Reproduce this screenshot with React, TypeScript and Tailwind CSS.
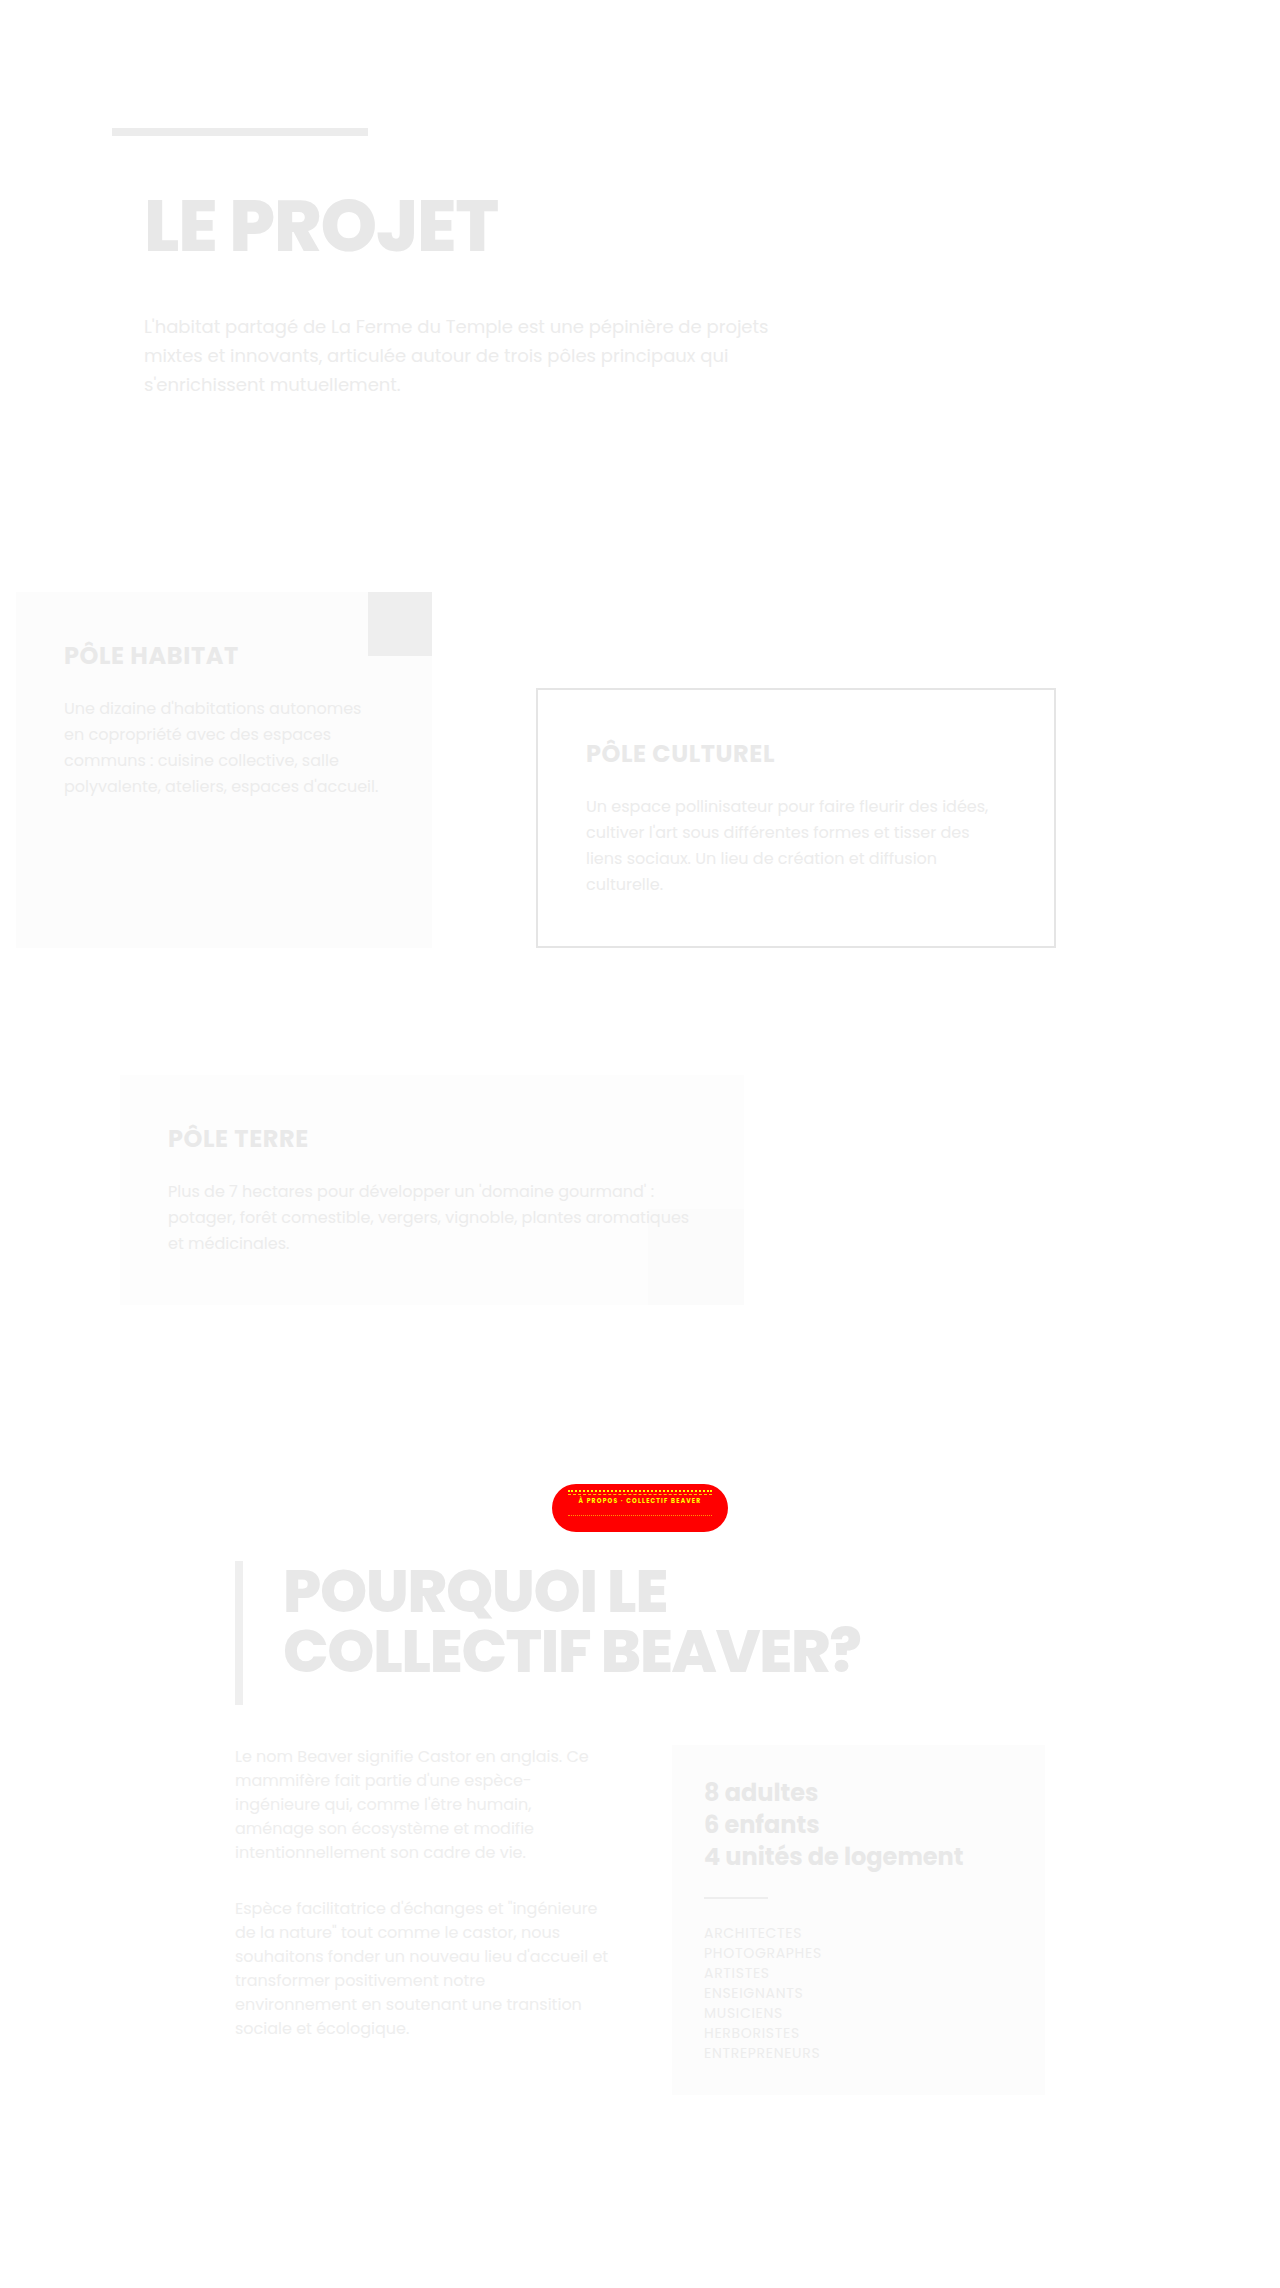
import type { ReactNode } from 'react';

const font = "font-['Poppins','Inter','Open_Sans',sans-serif]";

function Lines({ lines }: { lines: string[] }) {
  return (
    <>
      {lines.map((l) => (
        <span key={l} className="block whitespace-nowrap">
          {l}
        </span>
      ))}
    </>
  );
}

interface PoleProps {
  title: string;
  lines: string[];
  className?: string;
  corner?: ReactNode;
}

function Pole({ title, lines, className, corner }: PoleProps) {
  return (
    <div className={`relative p-12 ${className ?? ''}`}>
      {corner}
      <h3 className="relative text-2xl leading-8 font-bold tracking-wide uppercase text-[#e9e9e9]">
        {title}
      </h3>
      <p className="relative mt-6 text-base leading-[26px] text-[#ececec]">
        <Lines lines={lines} />
      </p>
    </div>
  );
}

const metiers = [
  'Architectes',
  'Photographes',
  'Artistes',
  'Enseignants',
  'Musiciens',
  'Herboristes',
  'Entrepreneurs',
];

export default function App() {
  return (
    <div className={`min-h-screen bg-white ${font}`}>
      {/* intro */}
      <section className="px-[112px] pt-32 pb-20">
        <div className="h-2 w-64 bg-[#ececec]" />
        <h1 className="mt-[54px] ml-8 text-[72px] leading-[72px] font-extrabold tracking-[-0.015em] text-[#e8e8e8]">
          LE PROJET
        </h1>
        <p className="mt-[50px] ml-8 text-lg leading-[29px] text-[#ececec]">
          <Lines
            lines={[
              "L'habitat partagé de La Ferme du Temple est une pépinière de projets",
              'mixtes et innovants, articulée autour de trois pôles principaux qui',
              "s'enrichissent mutuellement.",
            ]}
          />
        </p>
      </section>

      {/* les trois pôles */}
      <section className="px-4 pt-[113px]">
        <div className="flex items-end gap-[104px]">
          <Pole
            title="Pôle Habitat"
            className="h-[356px] w-[416px] bg-[#fcfcfc]"
            corner={<div className="absolute top-0 right-0 h-16 w-16 bg-[#eeeeee]" />}
            lines={[
              "Une dizaine d'habitations autonomes",
              'en copropriété avec des espaces',
              'communs : cuisine collective, salle',
              "polyvalente, ateliers, espaces d'accueil.",
            ]}
          />
          <Pole
            title="Pôle Culturel"
            className="w-[520px] border-2 border-[#e5e5e5] bg-white"
            lines={[
              'Un espace pollinisateur pour faire fleurir des idées,',
              "cultiver l'art sous différentes formes et tisser des",
              'liens sociaux. Un lieu de création et diffusion',
              'culturelle.',
            ]}
          />
        </div>
        <Pole
          title="Pôle Terre"
          className="mt-[127px] ml-[104px] w-[624px] bg-[#fdfdfd]"
          corner={<div className="absolute right-0 bottom-0 h-24 w-24 bg-[#fbfbfb]" />}
          lines={[
            "Plus de 7 hectares pour développer un 'domaine gourmand' :",
            'potager, forêt comestible, vergers, vignoble, plantes aromatiques',
            'et médicinales.',
          ]}
        />
      </section>

      {/* pourquoi beaver */}
      <section className="pt-[179px] pb-32">
        <div className="mx-auto flex h-12 w-[176px] flex-col items-center justify-start gap-[2px] overflow-hidden rounded-full bg-[#ff0000] px-4 pt-[6px]">
          <div className="w-full border-t-2 border-dotted border-[#ffff00]" />
          <div className="w-full border-t border-dashed border-[#ffff00] opacity-80" />
          <span className="text-[6px] leading-[8px] font-bold tracking-[0.2em] whitespace-nowrap text-[#ffff00]">
            À PROPOS · COLLECTIF BEAVER
          </span>
          <div className="mt-[8px] w-full border-t border-dotted border-[#ffff00] opacity-60" />
        </div>

        <div className="mx-auto mt-[29px] w-[810px]">
          <div className="border-l-8 border-[#efefef] pb-6 pl-10">
            <h2 className="text-[60px] leading-[60px] font-extrabold tracking-[-0.02em] text-[#e8e8e8]">
              POURQUOI LE
              <br />
              COLLECTIF BEAVER?
            </h2>
          </div>

          <div className="mt-10 grid grid-cols-2 items-start gap-16">
            <div className="text-base leading-6 text-[#eeeeee]">
              <p>
                <Lines
                  lines={[
                    'Le nom Beaver signifie Castor en anglais. Ce',
                    "mammifère fait partie d'une espèce-",
                    "ingénieure qui, comme l'être humain,",
                    'aménage son écosystème et modifie',
                    'intentionnellement son cadre de vie.',
                  ]}
                />
              </p>
              <p className="mt-8">
                <Lines
                  lines={[
                    'Espèce facilitatrice d\'échanges et "ingénieure',
                    'de la nature" tout comme le castor, nous',
                    "souhaitons fonder un nouveau lieu d'accueil et",
                    'transformer positivement notre',
                    'environnement en soutenant une transition',
                    'sociale et écologique.',
                  ]}
                />
              </p>
            </div>

            <div className="bg-[#fcfcfc] p-8">
              <p className="text-2xl leading-8 font-bold text-[#e8e8e8]">
                8 adultes
                <br />
                6 enfants
                <br />
                4 unités de logement
              </p>
              <div className="mt-6 h-0.5 w-16 bg-[#eeeeee]" />
              <ul className="mt-6 text-sm leading-5 tracking-wider uppercase text-[#ededed]">
                {metiers.map((m) => (
                  <li key={m}>{m}</li>
                ))}
              </ul>
            </div>
          </div>
        </div>
      </section>
    </div>
  );
}
